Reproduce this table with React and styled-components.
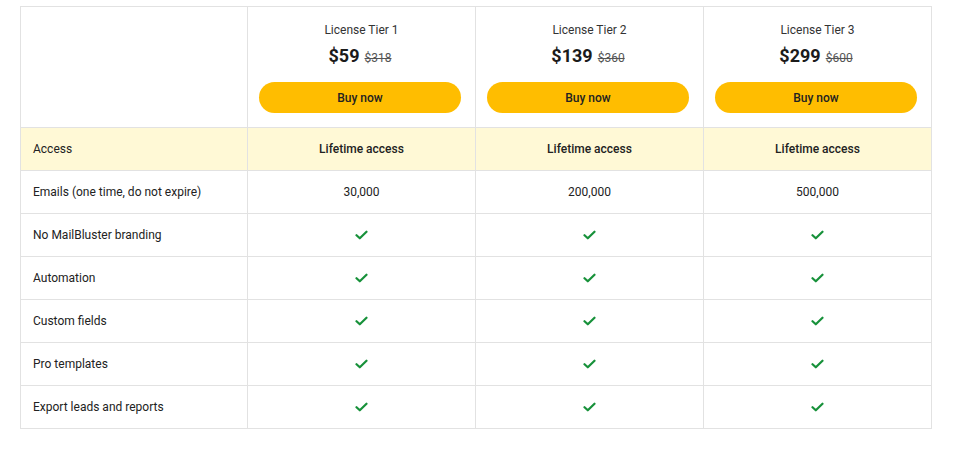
import React from 'react'
import styled, { createGlobalStyle } from 'styled-components'

const GlobalStyle = createGlobalStyle`
  body {
    margin: 0;
    background: #fff;
    font-family: Roboto, "Liberation Sans", sans-serif;
    color: #222;
  }
`

const Page = styled.div`
  padding: 6px 23px 0 20px;
`

const Table = styled.div`
  display: grid;
  grid-template-columns: 227px repeat(3, 228px);
  border-top: 1px solid #e2e2e2;
  border-left: 1px solid #e2e2e2;
  width: 911px;
`

const Cell = styled.div`
  height: 43px;
  box-sizing: border-box;
  border-right: 1px solid #e2e2e2;
  border-bottom: 1px solid #e2e2e2;
  background: ${p => (p.$highlight ? '#fff9d6' : '#fff')};
  display: flex;
  align-items: center;
  justify-content: ${p => (p.$label ? 'flex-start' : 'center')};
  padding: ${p => (p.$label ? '0 12px' : '0')};
  font-size: 12px;
  font-weight: ${p => (p.$bold ? 500 : 400)};
  color: #222;
`

const HeadCell = styled.div`
  height: 121px;
  box-sizing: border-box;
  border-right: 1px solid #e2e2e2;
  border-bottom: 1px solid #e2e2e2;
  display: flex;
  flex-direction: column;
  align-items: center;
  padding: 16px 0 0;
`

const TierName = styled.div`
  font-size: 12px;
  color: #333;
  line-height: 14px;
`

const PriceRow = styled.div`
  display: flex;
  align-items: baseline;
  gap: 5px;
  margin-top: 8px;
  margin-left: -3px;
`

const Price = styled.span`
  font-size: 18px;
  font-weight: 700;
  color: #1b1b1b;
`

const OldPrice = styled.span`
  font-size: 12px;
  color: #555;
  text-decoration: line-through;
`

const BuyButton = styled.button`
  margin: 16px 0 0 11px;
  align-self: flex-start;
  width: 202px;
  height: 31px;
  border: none;
  border-radius: 16px;
  background: #ffbd00;
  font-family: inherit;
  font-size: 12px;
  font-weight: 500;
  color: #222;
  cursor: pointer;
`

const Check = () => (
  <svg width="13" height="10" viewBox="0 0 13 10" fill="none">
    <path d="M1.5 5.2 L4.8 8.3 L11.5 1.7" stroke="#17913a" strokeWidth="2.2" strokeLinecap="round" strokeLinejoin="round" />
  </svg>
)

const tiers = [
  { name: 'License Tier 1', price: '$59', old: '$318', emails: '30,000' },
  { name: 'License Tier 2', price: '$139', old: '$360', emails: '200,000' },
  { name: 'License Tier 3', price: '$299', old: '$600', emails: '500,000' },
]

const features = ['No MailBluster branding', 'Automation', 'Custom fields', 'Pro templates', 'Export leads and reports']

export default function App() {
  return (
    <Page>
      <GlobalStyle />
      <Table>
        <HeadCell />
        {tiers.map(t => (
          <HeadCell key={t.name}>
            <TierName>{t.name}</TierName>
            <PriceRow>
              <Price>{t.price}</Price>
              <OldPrice>{t.old}</OldPrice>
            </PriceRow>
            <BuyButton>Buy now</BuyButton>
          </HeadCell>
        ))}

        <Cell $label $highlight>Access</Cell>
        {tiers.map(t => (
          <Cell key={t.name} $highlight $bold>Lifetime access</Cell>
        ))}

        <Cell $label>Emails (one time, do not expire)</Cell>
        {tiers.map(t => (
          <Cell key={t.name}>{t.emails}</Cell>
        ))}

        {features.map(f => (
          <React.Fragment key={f}>
            <Cell $label>{f}</Cell>
            {tiers.map(t => (
              <Cell key={t.name}><Check /></Cell>
            ))}
          </React.Fragment>
        ))}
      </Table>
    </Page>
  )
}
